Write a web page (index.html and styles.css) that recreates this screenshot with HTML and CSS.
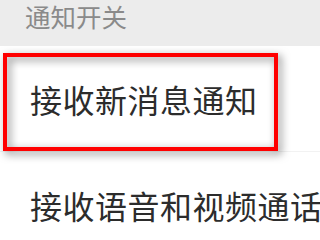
FILE: index.html
```html
<!DOCTYPE html>
<html lang="zh-CN">
<head>
<meta charset="utf-8">
<link rel="stylesheet" href="styles.css">
</head>
<body>
<div class="screen">
  <div class="section-header">通知开关</div>
  <div class="row">接收新消息通知</div>
  <div class="row">接收语音和视频通话</div>
  <div class="highlight"></div>
</div>
</body>
</html>
```
FILE: styles.css
```css
html, body {
  margin: 0;
  padding: 0;
  background: #ffffff;
}
.screen {
  position: relative;
  width: 320px;
  height: 240px;
  overflow: hidden;
  font-family: "Noto Sans CJK SC", "Noto Sans", sans-serif;
}
.section-header {
  height: 46px;
  box-sizing: border-box;
  background: #ececec;
  color: #8a8a8a;
  font-size: 25.5px;
  line-height: 26px;
  padding: 3px 0 0 25px;
  white-space: nowrap;
}
.row {
  height: 106px;
  box-sizing: border-box;
  display: flex;
  align-items: center;
  padding-left: 30px;
  font-size: 32px;
  letter-spacing: 0.5px;
  color: #2c2c2c;
  white-space: nowrap;
  border-bottom: 1px solid #f2f2f2;
}
.highlight {
  position: absolute;
  left: 3px;
  top: 53px;
  width: 275px;
  height: 98px;
  box-sizing: border-box;
  border: 4px solid #ff0000;
  filter: drop-shadow(3px 3px 4px rgba(0, 0, 0, 0.5));
}
```
